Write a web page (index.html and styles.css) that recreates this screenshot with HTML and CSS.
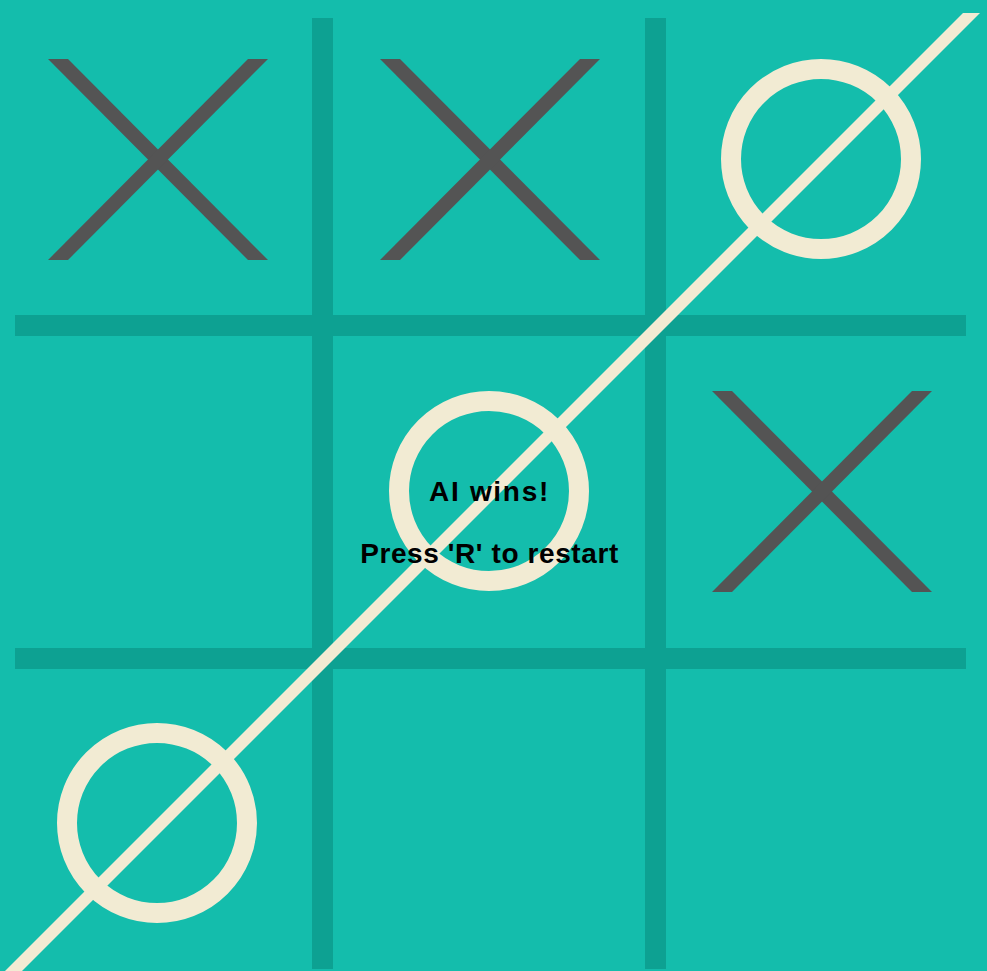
FILE: index.html
```html
<!DOCTYPE html>
<html lang="en">
<head>
<meta charset="utf-8">
<title>Tic Tac Toe</title>
<link rel="stylesheet" href="styles.css">
</head>
<body>
<main class="game">
  <svg class="board" width="987" height="971" viewBox="0 0 987 971" xmlns="http://www.w3.org/2000/svg">
    <g class="grid">
      <rect x="312" y="18" width="21" height="951"/>
      <rect x="645" y="18" width="21" height="951"/>
      <rect x="15" y="315" width="951" height="21"/>
      <rect x="15" y="648" width="951" height="21"/>
    </g>
    <g class="cross" transform="translate(48 59)">
      <polygon points="0,0 20,0 220,201 200,201"/>
      <polygon points="200,0 220,0 20,201 0,201"/>
    </g>
    <g class="cross" transform="translate(380 59)">
      <polygon points="0,0 20,0 220,201 200,201"/>
      <polygon points="200,0 220,0 20,201 0,201"/>
    </g>
    <g class="cross" transform="translate(712 391)">
      <polygon points="0,0 20,0 220,201 200,201"/>
      <polygon points="200,0 220,0 20,201 0,201"/>
    </g>
    <g class="nought">
      <circle cx="821" cy="159" r="90"/>
      <circle cx="489" cy="491" r="90"/>
      <circle cx="157" cy="823" r="90"/>
    </g>
    <polygon class="win-line" points="963,13 980,13 13,980 -4,980"/>
  </svg>
  <div class="message">
    <p class="message-line message-line--title">AI wins!</p>
    <p class="message-line">Press 'R' to restart</p>
  </div>
</main>
</body>
</html>
```

FILE: styles.css
```css
html, body {
  margin: 0;
  padding: 0;
  background: #14bdac;
  overflow: hidden;
}

.game {
  position: relative;
  width: 987px;
  height: 971px;
  background: #14bdac;
}

.board {
  display: block;
}

.grid rect {
  fill: #0da192;
}

.cross polygon {
  fill: #545454;
}

.nought circle {
  fill: none;
  stroke: #f2ebd3;
  stroke-width: 20;
}

.win-line {
  fill: #f2ebd3;
}

.message {
  position: absolute;
  left: 0;
  top: 478px;
  width: 979px;
  display: flex;
  flex-direction: column;
  align-items: center;
  gap: 34px;
}

.message-line {
  margin: 0;
  font-family: "Liberation Sans", Arial, sans-serif;
  font-weight: bold;
  font-size: 28px;
  line-height: 28px;
  letter-spacing: 0.6px;
  color: #000;
}

.message-line--title {
  letter-spacing: 1.7px;
}
```
